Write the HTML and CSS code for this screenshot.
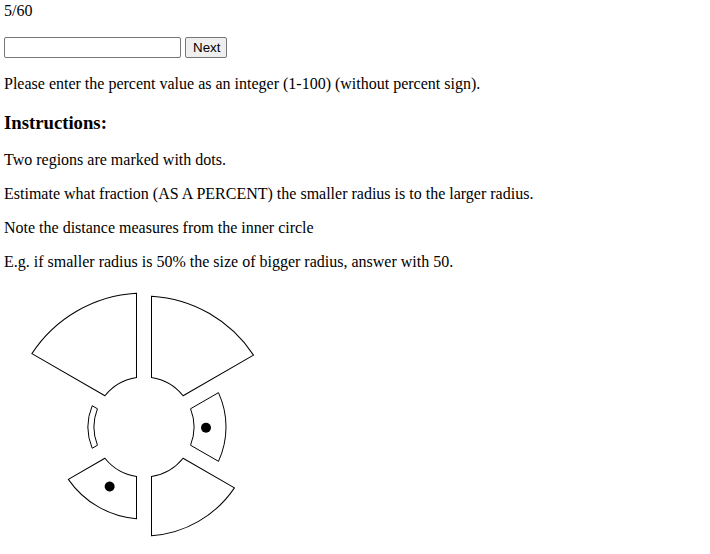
FILE: index.html
```html
<!DOCTYPE html>
<html lang="en">
<head>
<meta charset="utf-8">
<title>Estimate</title>
<link rel="stylesheet" href="styles.css">
</head>
<body>
<div class="counter">5/60</div>
<form class="answer-row" onsubmit="return false;">
  <input class="answer-input" type="text">
  <button class="next-btn" type="submit">Next</button>
</form>
<p class="text text-first">Please enter the percent value as an integer (1-100) (without percent sign).</p>
<h3 class="heading">Instructions:</h3>
<p class="text">Two regions are marked with dots.</p>
<p class="text">Estimate what fraction (AS A PERCENT) the smaller radius is to the larger radius.</p>
<p class="text">Note the distance measures from the inner circle</p>
<p class="text">E.g. if smaller radius is 50% the size of bigger radius, answer with 50.</p>
<svg class="diagram" width="280" height="280" viewBox="0 0 280 280">
  <g transform="translate(140 140)" fill="#fff" stroke="#000" stroke-width="1">
    <path transform="rotate(0)" d="M46.56 -18.22 L74.47 -34.33 A82 82 0 0 1 74.47 34.33 L46.56 18.22 A50 50 0 0 0 46.56 -18.22 Z"/>
    <path transform="rotate(-60)" d="M46.56 -18.22 L117.01 -58.90 A131 131 0 0 1 117.01 58.90 L46.56 18.22 A50 50 0 0 0 46.56 -18.22 Z"/>
    <path transform="rotate(-120)" d="M46.56 -18.22 L119.61 -60.40 A134 134 0 0 1 119.61 60.40 L46.56 18.22 A50 50 0 0 0 46.56 -18.22 Z"/>
    <path transform="rotate(180)" d="M46.56 -18.22 L51.81 -21.25 A56 56 0 0 1 51.81 21.25 L46.56 18.22 A50 50 0 0 0 46.56 -18.22 Z"/>
    <path transform="rotate(120)" d="M46.56 -18.22 L83.16 -39.35 A92 92 0 0 1 83.16 39.35 L46.56 18.22 A50 50 0 0 0 46.56 -18.22 Z"/>
    <path transform="rotate(60)" d="M46.56 -18.22 L97.92 -47.88 A109 109 0 0 1 97.92 47.88 L46.56 18.22 A50 50 0 0 0 46.56 -18.22 Z"/>
    <circle cx="62" cy="0.7" r="5" fill="#000" stroke="none"/>
    <circle transform="rotate(120)" cx="68.7" cy="0" r="5" fill="#000" stroke="none"/>
  </g>
</svg>
</body>
</html>
```
FILE: styles.css
```css
html {
  background: #fff;
}
body {
  margin: 0;
  padding: 2px 4px 0 4px;
  font-family: "Liberation Serif", "Times New Roman", serif;
  font-size: 16px;
  color: #000;
}
.counter {
  line-height: normal;
}
.answer-row {
  display: flex;
  align-items: flex-start;
  gap: 4px;
  margin: 16.5px 0 17px 0;
}
.answer-input {
  box-sizing: border-box;
  width: 177px;
  height: 21px;
  margin: 0;
  padding: 1px 2px;
  border: 1px solid #767676;
  border-radius: 2px;
  background: #fff;
  font-family: "Liberation Sans", Arial, sans-serif;
  font-size: 13.33px;
}
.next-btn {
  box-sizing: border-box;
  height: 21px;
  margin: 0;
  padding: 1px 6px 1px 7px;
  border: 1px solid #767676;
  border-radius: 2px;
  background: #efefef;
  color: #000;
  font-family: "Liberation Sans", Arial, sans-serif;
  font-size: 13.33px;
}
.text {
  margin: 16px 0;
}
.text-first {
  margin-top: 0;
}
.heading {
  font-size: 1.17em;
  font-weight: bold;
  margin: 19.72px 0 16.72px 0;
}
.diagram {
  display: block;
}
```
